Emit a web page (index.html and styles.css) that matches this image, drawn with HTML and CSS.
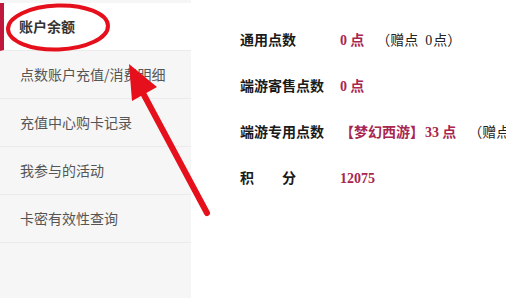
FILE: index.html
```html
<!DOCTYPE html>
<html lang="zh-CN">
<head>
<meta charset="utf-8">
<link rel="stylesheet" href="styles.css">
</head>
<body>
<div class="page">
  <ul class="side">
    <li class="item active">账户余额</li>
    <li class="item">点数账户充值/消费明细</li>
    <li class="item">充值中心购卡记录</li>
    <li class="item">我参与的活动</li>
    <li class="item">卡密有效性查询</li>
  </ul>
  <div class="main">
    <div class="row"><span class="label">通用点数</span><span class="val"><b class="num">0</b> 点</span><span class="note">（赠点<span class="num-n">0</span>点）</span></div>
    <div class="row"><span class="label">端游寄售点数</span><span class="val"><b class="num">0</b> 点</span></div>
    <div class="row"><span class="label">端游专用点数</span><span class="val game">【梦幻西游】<b class="num">33</b> 点</span><span class="note">（赠点<span class="num-n">0</span>点）</span></div>
    <div class="row"><span class="label spaced">积<span class="gap"></span>分</span><span class="val"><b class="num">12075</b></span></div>
  </div>
  <svg class="mark" width="506" height="298" viewBox="0 0 506 298">
    <ellipse cx="58" cy="27.5" rx="50" ry="22" fill="none" stroke="#e5101b" stroke-width="4" transform="rotate(-2 58 27.5)"/>
    <line x1="207" y1="213" x2="144" y2="95" stroke="#e5101b" stroke-width="6" stroke-linecap="round"/>
    <polygon points="129,64 132,101 157,87" fill="#e5101b"/>
  </svg>
</div>
</body>
</html>
```

FILE: styles.css
```css
html, body {
  margin: 0;
  padding: 0;
  background: #fff;
}
body {
  width: 506px;
  height: 298px;
  overflow: hidden;
  font-family: "Noto Sans CJK SC", "Liberation Sans", sans-serif;
}
.page {
  position: relative;
  display: flex;
  height: 298px;
}
.side {
  list-style: none;
  margin: 0;
  padding: 3px 0 0;
  width: 191px;
  flex: none;
  background: #f6f6f6;
}
.item {
  height: 47px;
  line-height: 47px;
  border-bottom: 1px solid #ebebeb;
  padding-left: 20px;
  font-size: 14px;
  color: #555;
  box-sizing: content-box;
}
.item.active {
  background: #fff;
  border-left: 4px solid #c0183c;
  padding-left: 15px;
  font-weight: bold;
  color: #333;
}
.main {
  flex: 1;
  padding: 16px 0 0 49px;
  white-space: nowrap;
  overflow: hidden;
}
.row {
  display: flex;
  align-items: center;
  height: 46px;
  font-size: 14px;
}
.label {
  width: 100px;
  flex: none;
  font-weight: bold;
  color: #1a1a1a;
}
.gap {
  display: inline-block;
  width: 28px;
}
.val {
  font-weight: bold;
  color: #a8264f;
  font-size: 14px;
}
.game .num {
  margin-left: 1px;
}
.num {
  font-family: "Liberation Serif", serif;
  font-weight: bold;
  font-size: 14px;
}
.note {
  margin-left: 12px;
  color: #222;
  font-size: 14px;
}
.num-n {
  font-family: "Liberation Serif", serif;
  margin-left: 7px;
  margin-right: 1px;
}
.mark {
  position: absolute;
  left: 0;
  top: 0;
  pointer-events: none;
}
```
